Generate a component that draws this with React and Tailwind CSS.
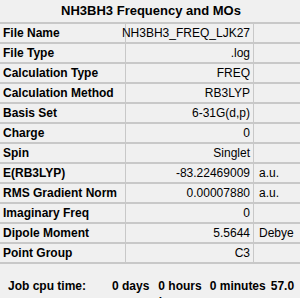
import React from "react";

const rows = [
  ["File Name", "NH3BH3_FREQ_LJK27", ""],
  ["File Type", ".log", ""],
  ["Calculation Type", "FREQ", ""],
  ["Calculation Method", "RB3LYP", ""],
  ["Basis Set", "6-31G(d,p)", ""],
  ["Charge", "0", ""],
  ["Spin", "Singlet", ""],
  ["E(RB3LYP)", "-83.22469009", "a.u."],
  ["RMS Gradient Norm", "0.00007880", "a.u."],
  ["Imaginary Freq", "0", ""],
  ["Dipole Moment", "5.5644", "Debye"],
  ["Point Group", "C3", ""],
];

export default function App() {
  return (
    <div
      className="w-[300px] h-[298px] bg-[#f0f0f0] overflow-hidden text-black"
      style={{ fontFamily: '"Liberation Sans", Arial, sans-serif' }}
    >
      <div className="h-[22px] flex items-center justify-center text-[13px] font-bold pl-[2px]">
        NH3BH3 Frequency and MOs
      </div>
      <div className="border-b-2 border-[#c8c8c8]">
        {rows.map(([label, value, unit]) => (
          <div
            key={label}
            className="grid grid-cols-[125px_1px_127px_1px_46px] h-[20px] border-t-2 border-[#c8c8c8] text-[12px]"
          >
            <div className="pl-[3px] font-bold flex items-center leading-none">{label}</div>
            <div className="bg-[#c8c8c8]" />
            <div className="pr-[3px] flex items-center justify-end leading-none">{value}</div>
            <div className="bg-[#c8c8c8]" />
            <div className="pl-[5px] flex items-center leading-none">{unit}</div>
          </div>
        ))}
      </div>
      <div className="flex pt-[14px] text-[12px] font-bold leading-[16px]">
        <div className="w-[112px] pl-[8px] shrink-0">Job cpu time:</div>
        <div className="flex-1 flex flex-col">
          <div className="flex whitespace-nowrap">
            <span>0 days</span>
            <span className="ml-[9px]">0 hours</span>
            <span className="ml-[8px]">0 minutes</span>
            <span className="ml-[5px]">57.0</span>
          </div>
          <div className="pl-[8px]">seconds</div>
        </div>
      </div>
    </div>
  );
}
